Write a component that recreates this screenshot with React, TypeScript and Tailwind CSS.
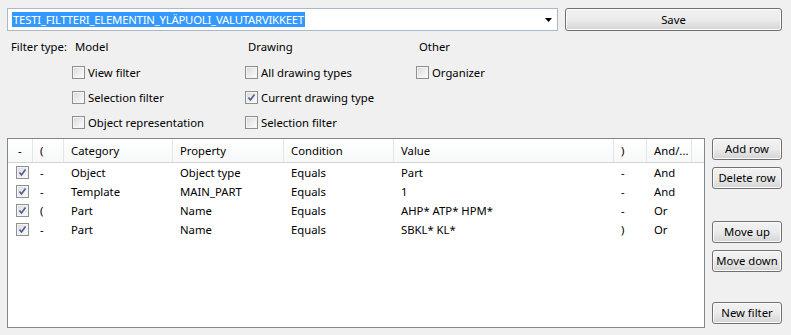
import type { ReactNode } from 'react';

// ── data ─────────────────────────────────────────────

type Row = { open: string; category: string; property: string; condition: string; value: string; close: string; op: string };

const ROWS: Row[] = [
  { open: '-', category: 'Object', property: 'Object type', condition: 'Equals', value: 'Part', close: '-', op: 'And' },
  { open: '-', category: 'Template', property: 'MAIN_PART', condition: 'Equals', value: '1', close: '-', op: 'And' },
  { open: '(', category: 'Part', property: 'Name', condition: 'Equals', value: 'AHP* ATP* HPM*', close: '-', op: 'Or' },
  { open: '-', category: 'Part', property: 'Name', condition: 'Equals', value: 'SBKL* KL*', close: ')', op: 'Or' },
];

// column widths (px) — boundaries measured from the header separators
const COLS = ['w-[25px] pl-[10px]', 'w-[31px] pl-[7px]', 'w-[109px] pl-[7px]', 'w-[111px] pl-[7px]', 'w-[110px] pl-[7px]', 'w-[220px] pl-[7px]', 'w-[33px] pl-[7px]', 'w-[45px] pl-[7px]'];

// ── small widgets ────────────────────────────────────

function CheckBox({ checked = false }: { checked?: boolean }) {
  return (
    <span className="flex h-[13px] w-[13px] shrink-0 items-center justify-center border border-[#8e8f8f] bg-white">
      <span className="flex h-[11px] w-[11px] items-center justify-center border border-[#f4f4f4] bg-gradient-to-br from-[#dcdcdc] to-[#fbfbfb]">
        {checked && (
          <svg width="9" height="9" viewBox="0 0 9 9">
            <path d="M1.5 4.5 L3.5 7 L7.5 1.5" fill="none" stroke="#4b5e92" strokeWidth="1.6" />
          </svg>
        )}
      </span>
    </span>
  );
}

function Option({ label, checked }: { label: string; checked?: boolean }) {
  return (
    <div className="-ml-[3px] flex h-[25px] items-center gap-[3px]">
      <CheckBox checked={checked} />
      <span>{label}</span>
    </div>
  );
}

function Button({ children, className = '' }: { children: ReactNode; className?: string }) {
  return (
    <div
      className={[
        'flex items-center justify-center rounded-[3px] border border-[#707070]',
        'bg-gradient-to-b from-[#f2f2f2] via-[#ebebeb] to-[#d4d4d4]',
        'shadow-[inset_0_0_0_1px_#fcfcfc]',
        className,
      ].join(' ')}
    >
      {children}
    </div>
  );
}

// ── page ─────────────────────────────────────────────

export default function App() {
  return (
    <div className="h-[335px] w-[791px] overflow-hidden bg-[#f0f0f0] px-[7px] pt-[8px] text-[11.3px] leading-[16px] text-black [font-family:'Noto_Sans','Liberation_Sans',sans-serif]">
      {/* name + save */}
      <div className="flex h-[23px] gap-[7px]">
        <div className="flex w-[551px] items-center border border-[#abb8c9] bg-white pl-[4px] pr-[5px]">
          <span className="bg-[#3399ff] px-[1px] leading-[15px] tracking-[-0.2px] text-white">TESTI_FILTTERI_ELEMENTIN_YLÄPUOLI_VALUTARVIKKEET</span>
          <svg className="ml-auto" width="7" height="4" viewBox="0 0 7 4">
            <path d="M0 0 H7 L3.5 4 Z" fill="#000" />
          </svg>
        </div>
        <Button className="w-[217px]">Save</Button>
      </div>

      {/* filter type */}
      <div className="mt-[8px] flex pl-[4px]">
        <div className="w-[64px]">Filter type:</div>
        <div className="flex w-[173px] flex-col">
          <div className="h-[16px]">Model</div>
          <div className="mt-[5px]">
            <Option label="View filter" />
            <Option label="Selection filter" />
            <Option label="Object representation" />
          </div>
        </div>
        <div className="flex w-[171px] flex-col">
          <div className="h-[16px]">Drawing</div>
          <div className="mt-[5px]">
            <Option label="All drawing types" />
            <Option label="Current drawing type" checked />
            <Option label="Selection filter" />
          </div>
        </div>
        <div className="flex flex-col">
          <div className="h-[16px]">Other</div>
          <div className="mt-[5px]">
            <Option label="Organizer" />
          </div>
        </div>
      </div>

      {/* rules table + buttons */}
      <div className="mt-[3px] flex gap-[7px]">
        <div className="h-[190px] w-[698px] border border-[#828790] bg-white">
          <div className="flex h-[24px] border-b border-[#d5d5d5] bg-gradient-to-b from-white to-[#f7f8f9]">
            {['-', '(', 'Category', 'Property', 'Condition', 'Value', ')', 'And/...'].map((h, i) => (
              <div key={h} className={`flex items-center border-r border-[#e5e5e5] ${COLS[i]}`}>
                {h}
              </div>
            ))}
          </div>
          {ROWS.map((r, i) => (
            <div key={i} className="flex h-[19px] items-center">
              <div className="w-[25px] pl-[8px]">
                <CheckBox checked />
              </div>
              <div className={COLS[1]}>{r.open}</div>
              <div className={COLS[2]}>{r.category}</div>
              <div className={COLS[3]}>{r.property}</div>
              <div className={COLS[4]}>{r.condition}</div>
              <div className={COLS[5]}>{r.value}</div>
              <div className={COLS[6]}>{r.close}</div>
              <div className={COLS[7]}>{r.op}</div>
            </div>
          ))}
        </div>

        <div className="flex w-[70px] flex-col">
          <Button className="h-[22px]">Add row</Button>
          <Button className="mt-[7px] h-[22px]">Delete row</Button>
          <Button className="mt-[32px] h-[22px]">Move up</Button>
          <Button className="mt-[7px] h-[22px]">Move down</Button>
          <Button className="mt-[30px] h-[22px]">New filter</Button>
        </div>
      </div>
    </div>
  );
}
